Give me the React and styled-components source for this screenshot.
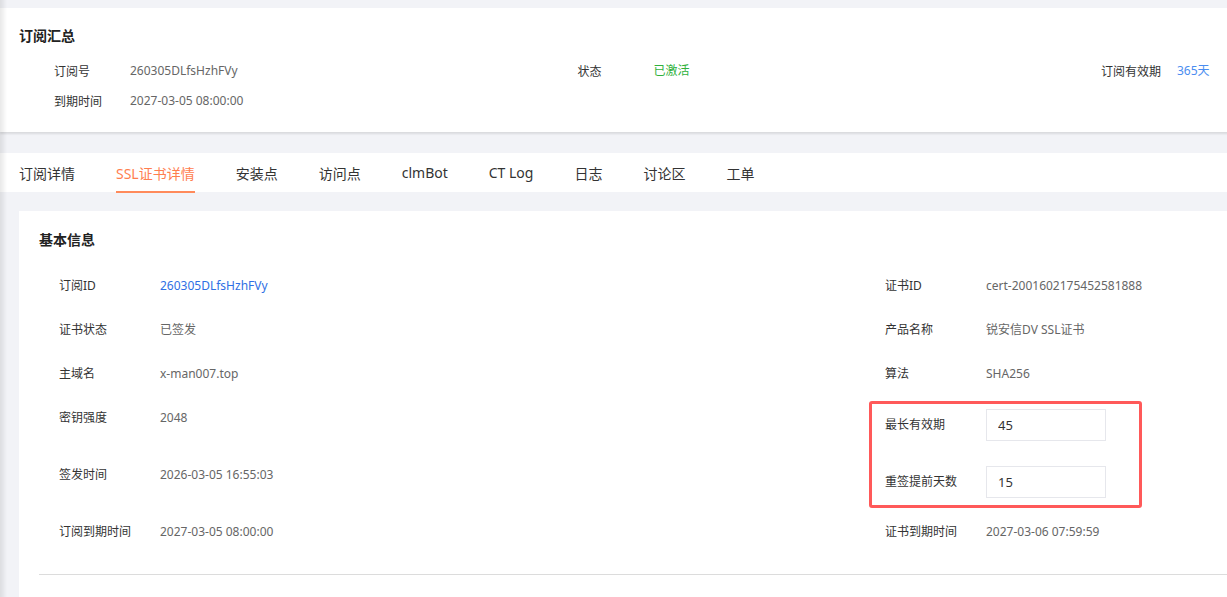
import React from "react";
import styled, { createGlobalStyle } from "styled-components";

const GlobalStyle = createGlobalStyle`
  body {
    margin: 0;
    background: #f2f3f7;
    font-family: "Noto Sans", "Noto Sans CJK SC", sans-serif;
    color: #333;
    overflow-x: hidden;
  }
`;

const summary = [
  [
    { label: "订阅号", value: "260305DLfsHzhFVy" },
    { label: "状态", value: "已激活", tone: "success" },
    { label: "订阅有效期", value: "365天", tone: "info" },
  ],
  [{ label: "到期时间", value: "2027-03-05 08:00:00" }],
];

const tabs = [
  "订阅详情",
  "SSL证书详情",
  "安装点",
  "访问点",
  "clmBot",
  "CT Log",
  "日志",
  "讨论区",
  "工单",
];

const rows = [
  [
    { label: "订阅ID", value: "260305DLfsHzhFVy", tone: "link" },
    { label: "证书ID", value: "cert-2001602175452581888" },
  ],
  [
    { label: "证书状态", value: "已签发" },
    { label: "产品名称", value: "锐安信DV SSL证书" },
  ],
  [
    { label: "主域名", value: "x-man007.top" },
    { label: "算法", value: "SHA256" },
  ],
  [
    { label: "密钥强度", value: "2048" },
    { label: "最长有效期", input: "45", markStart: true },
  ],
  [
    { label: "签发时间", value: "2026-03-05 16:55:03" },
    { label: "重签提前天数", input: "15" },
  ],
  [
    { label: "订阅到期时间", value: "2027-03-05 08:00:00" },
    { label: "证书到期时间", value: "2027-03-06 07:59:59" },
  ],
];

const toneColor = {
  success: "#2fb13c",
  info: "#4a8df0",
  link: "#2f6fe4",
};

export default function App() {
  return (
    <Page>
      <GlobalStyle />
      <EdgeShade />
      <SummaryCard>
        <CardTitle>订阅汇总</CardTitle>
        <SummaryGrid>
          {summary.map((line, i) =>
            line.map((item, j) => (
              <SummaryItem key={`${i}-${j}`}>
                <SummaryLabel>{item.label}</SummaryLabel>
                <Value $tone={item.tone}>{item.value}</Value>
              </SummaryItem>
            ))
          )}
        </SummaryGrid>
      </SummaryCard>

      <TabBar>
        {tabs.map((t, i) => (
          <Tab key={t} $active={i === 1}>
            {t}
          </Tab>
        ))}
      </TabBar>

      <InfoCard>
        <CardTitle>基本信息</CardTitle>
        <InfoGrid>
          {rows.map((row, i) =>
            row.map((item, j) => (
              <InfoItem key={`${i}-${j}`} $center={!!item.input}>
                <InfoLabel>{item.label}</InfoLabel>
                {item.input ? (
                  <NumberInput defaultValue={item.input} />
                ) : (
                  <Value $tone={item.tone}>{item.value}</Value>
                )}
                {item.markStart && <Highlight />}
              </InfoItem>
            ))
          )}
        </InfoGrid>
        <Divider />
      </InfoCard>
    </Page>
  );
}

const Page = styled.div`
  min-height: 100vh;
  padding-top: 8px;
  box-sizing: border-box;
  width: 1700px;
`;

const EdgeShade = styled.div`
  position: fixed;
  left: 0;
  top: 0;
  bottom: 0;
  width: 7px;
  background: linear-gradient(to right, rgba(0, 0, 0, 0.09), rgba(0, 0, 0, 0));
  pointer-events: none;
  z-index: 5;
`;

const SummaryCard = styled.section`
  background: #fff;
  padding: 18px 19px 16px;
  box-shadow: 0 2px 2px rgba(0, 0, 0, 0.1);
`;

const CardTitle = styled.h3`
  margin: 0;
  font-size: 14px;
  line-height: 20px;
  font-weight: 700;
  color: #222;
`;

const SummaryGrid = styled.div`
  display: grid;
  grid-template-columns: repeat(3, 523.5px);
  grid-auto-rows: 30px;
  margin-top: 10px;
  padding-left: 35px;
`;

const SummaryItem = styled.div`
  display: flex;
  align-items: center;
  font-size: 12px;
`;

const SummaryLabel = styled.span`
  width: 76px;
  flex-shrink: 0;
  color: #333;
`;

const Value = styled.span`
  font-size: 12px;
  line-height: 20px;
  color: ${(p) => toneColor[p.$tone] || "#666"};
`;

const TabBar = styled.nav`
  display: flex;
  gap: 41px;
  height: 39px;
  margin-top: 21px;
  padding-left: 19px;
  background: #fff;
`;

const Tab = styled.div`
  position: relative;
  display: flex;
  align-items: center;
  font-size: 14px;
  color: ${(p) => (p.$active ? "#ff7e4f" : "#333")};

  &::after {
    content: "";
    display: ${(p) => (p.$active ? "block" : "none")};
    position: absolute;
    left: 0;
    right: 0;
    bottom: -1px;
    height: 2px;
    background: #ff8a5b;
  }
`;

const InfoCard = styled.section`
  margin: 19px 0 0 19px;
  padding: 19px 0 40px 20px;
  background: #fff;
`;

const InfoGrid = styled.div`
  display: grid;
  grid-template-columns: repeat(2, 826px);
  row-gap: 24px;
  margin-top: 26px;
  padding-left: 20px;
`;

const InfoItem = styled.div`
  position: relative;
  display: flex;
  align-items: ${(p) => (p.$center ? "center" : "flex-start")};
  min-height: ${(p) => (p.$center ? "33px" : "20px")};
  font-size: 12px;
  line-height: 20px;
`;

const InfoLabel = styled.span`
  width: 101px;
  flex-shrink: 0;
  color: #333;
`;

const NumberInput = styled.input`
  width: 120px;
  height: 32px;
  box-sizing: border-box;
  border: 1px solid #e6e7ec;
  padding: 0 11px;
  font: inherit;
  font-size: 13px;
  color: #333;
  outline: none;
`;

const Highlight = styled.div`
  position: absolute;
  left: -16px;
  top: -7px;
  width: 273px;
  height: 107px;
  box-sizing: border-box;
  border: 3px solid #ff5959;
  border-radius: 3px;
  pointer-events: none;
`;

const Divider = styled.div`
  height: 1px;
  margin-top: 32px;
  background: #dcdcdc;
`;
